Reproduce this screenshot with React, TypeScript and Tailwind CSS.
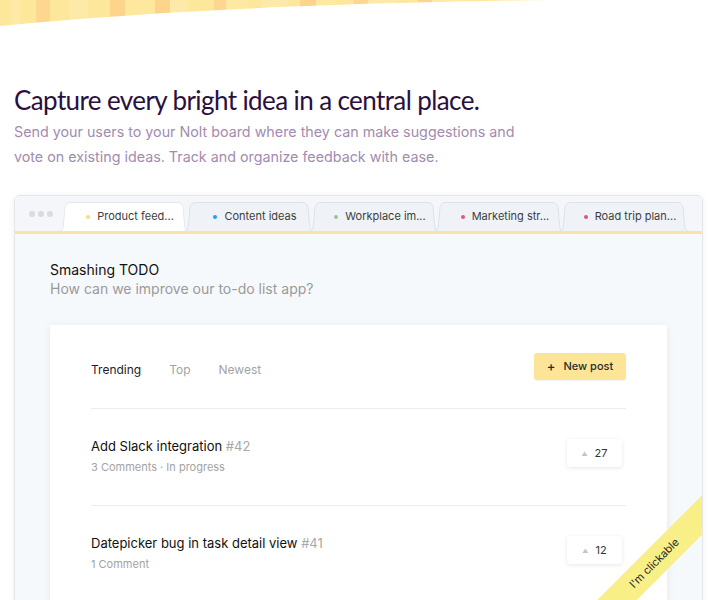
import React from 'react';

const stripes: [number, number, string][] = [
    [0, 12, '#fde79a'], [12, 8, '#fdeaa6'], [20, 16, '#fde79a'], [36, 14, '#fdd690'], [50, 20, '#fde79a'],
    [70, 18, '#fdeaa8'], [88, 8, '#fde79a'], [96, 14, '#fde79a'], [110, 15, '#fdd48c'], [125, 30, '#fde89e'],
    [155, 15, '#fdd48c'], [170, 18, '#fdeaa8'], [188, 26, '#fde79a'], [214, 12, '#fdd690'], [226, 22, '#fde9a2'],
    [248, 14, '#fde79a'], [262, 26, '#fdeaa8'], [288, 12, '#fde79a'], [300, 16, '#fdd48c'], [316, 20, '#fde9a2'],
    [336, 18, '#fde79a'], [354, 14, '#fdd690'], [368, 30, '#fdeaa8'], [398, 20, '#fde79a'], [418, 14, '#fdd48c'],
    [432, 40, '#fde9a2'], [472, 30, '#fde79a'], [502, 50, '#fdeaa8'],
];

const tabs = [
    { label: 'Product feed...', dot: '#f3df86', active: true },
    { label: 'Content ideas', dot: '#1ba5ef', active: false },
    { label: 'Workplace im...', dot: '#8fcb98', active: false },
    { label: 'Marketing str...', dot: '#df5a6c', active: false },
    { label: 'Road trip plan...', dot: '#d9557c', active: false },
];

const posts = [
    { title: 'Add Slack integration', num: '#42', meta: '3 Comments · In progress', votes: 27 },
    { title: 'Datepicker bug in task detail view', num: '#41', meta: '1 Comment', votes: 12 },
];

function Tab({ label, dot, active }: { label: string; dot: string; active: boolean }) {
    return (
        <div className="relative w-[130px] h-[29px] -mr-[5px] pl-[12px] flex items-center justify-center gap-[7px] text-[11px] text-[#3d3d3d]">
            <svg className="absolute inset-0" width="130" height="29" viewBox="0 0 130 29">
                <path
                    d="M0.5 29 C3 29 4 27.5 4.3 24 L6 5.5 C6.4 2 8.5 0.5 12 0.5 H118 C121.5 0.5 123.6 2 124 5.5 L125.7 24 C126 27.5 127 29 129.5 29"
                    fill={active ? '#ffffff' : '#eff3f7'}
                    stroke={active ? '#e4e8ed' : '#dde2e8'}
                    strokeWidth="1"
                />
            </svg>
            <span className="relative w-[4px] h-[4px] rounded-full" style={{ backgroundColor: dot }} />
            <span className="relative">{label}</span>
        </div>
    );
}

export default function App() {
    return (
        <div className="w-[717px] h-[600px] overflow-hidden bg-white font-['Inter',sans-serif]">
            <svg width="717" height="27" viewBox="0 0 717 27" className="block">
                <defs>
                    <clipPath id="wave">
                        <path d="M0 0 H548 C420 2 200 6 0 26 Z" />
                    </clipPath>
                </defs>
                <g clipPath="url(#wave)">
                    {stripes.map(([x, w, c]) => (
                        <rect key={x} x={x} y="0" width={w} height="27" fill={c} />
                    ))}
                </g>
            </svg>

            <div className="px-[14px] mt-[56px]">
                <h1 className="font-['Lato',sans-serif] text-[26px] leading-[34px] tracking-[-0.6px] text-[#2a1040]">
                    Capture every bright idea in a central place.
                </h1>
                <p className="mt-[2px] w-[520px] text-[14.3px] leading-[25px] text-[#a38bb0]">
                    Send your users to your Nolt board where they can make suggestions and vote on existing ideas. Track and organize feedback with ease.
                </p>
            </div>

            <div className="relative mx-[14px] mt-[26px] h-[440px] rounded-[6px] border border-[#e3e7ec] overflow-hidden shadow-[0_1px_6px_rgba(0,0,0,0.07)]">
                <div className="h-[35px] bg-[#f4f6f9] flex items-end">
                    <div className="w-[44px] h-full flex items-center gap-[3px] pl-[14px]">
                        <span className="w-[6px] h-[6px] rounded-full bg-[#d8dbe0]" />
                        <span className="w-[6px] h-[6px] rounded-full bg-[#d8dbe0]" />
                        <span className="w-[6px] h-[6px] rounded-full bg-[#d8dbe0]" />
                    </div>
                    {tabs.map((t) => (
                        <Tab key={t.label} {...t} />
                    ))}
                </div>
                <div className="h-[3px] bg-[#fbe4a3]" />
                <div className="bg-[#f6f9fc] h-full px-[35px] pt-[27px]">
                    <div className="text-[14px] leading-[18px] text-[#111]">Smashing TODO</div>
                    <div className="mt-[1px] text-[14px] leading-[18px] text-[#9a9a9a]">How can we improve our to-do list app?</div>

                    <div className="mt-[27px] w-[617px] bg-white px-[41px] shadow-[0_1px_8px_rgba(0,0,0,0.07)]">
                        <div className="pt-[28px] pb-[28px] flex items-center justify-between border-b border-[#ececec]">
                            <div className="mt-[7px] flex gap-[28px] text-[12px]">
                                <span className="text-[#222]">Trending</span>
                                <span className="text-[#a3a3a3]">Top</span>
                                <span className="text-[#a3a3a3]">Newest</span>
                            </div>
                            <button className="w-[92px] h-[27px] rounded-[3px] bg-[#fde598] shadow-[0_1px_2px_rgba(0,0,0,0.06)] text-[11px] font-medium text-[#2a2a2a] flex items-center justify-center gap-[8px]">
                                <span className="text-[13px] leading-none">+</span>
                                <span>New post</span>
                            </button>
                        </div>
                        {posts.map((p) => (
                            <div key={p.num} className="h-[97px] pt-[27px] flex justify-between border-b border-[#ececec]">
                                <div>
                                    <div className="text-[13px] leading-[20px] text-[#111]">
                                        {p.title} <span className="text-[#a8a8a8]">{p.num}</span>
                                    </div>
                                    <div className="mt-[3px] text-[11px] leading-[16px] text-[#a3a3a3]">{p.meta}</div>
                                </div>
                                <div className="mt-[3px] mr-[4px] w-[55px] h-[28px] rounded-[3px] bg-white shadow-[0_1px_4px_rgba(0,0,0,0.1)] flex items-center justify-center gap-[7px]">
                                    <span className="text-[6px] text-[#c4c4c4]">▲</span>
                                    <span className="text-[11px] text-[#333]">{p.votes}</span>
                                </div>
                            </div>
                        ))}
                    </div>
                </div>

                <div className="absolute left-[539px] top-[353px] w-[200px] h-[28px] -rotate-45 bg-[#f9ef87] flex items-center justify-center text-[11px] text-[#2a2a2a]">
                    I'm clickable
                </div>
            </div>
        </div>
    );
}
